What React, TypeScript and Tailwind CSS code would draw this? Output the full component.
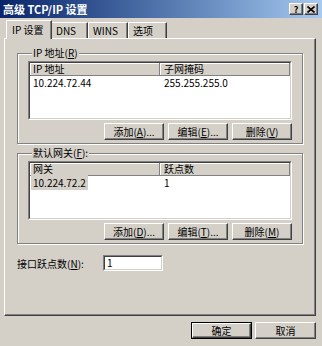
import React from "react";

const raised =
  "bg-[#d4d0c8] border border-t-white border-l-white border-r-[#404040] border-b-[#404040] shadow-[inset_-1px_-1px_0_#808080]";

function Btn({ children, wide, isDefault }: { children: React.ReactNode; wide?: boolean; isDefault?: boolean }) {
  if (isDefault) {
    return (
      <div className={`${wide ? "w-[61px]" : "w-[60px]"} h-[17px] border border-black`}>
        <div className={`${raised} h-full flex items-center justify-center`}>{children}</div>
      </div>
    );
  }
  return (
    <div className={`${raised} ${wide ? "w-[61px]" : "w-[60px]"} h-[17px] flex items-center justify-center`}>
      {children}
    </div>
  );
}

function ListView({ cols, row, selected }: { cols: [string, string]; row: [string, string]; selected?: boolean }) {
  return (
    <div className="h-[59px] border border-t-[#808080] border-l-[#808080] border-r-white border-b-white">
      <div className="h-full border border-t-[#404040] border-l-[#404040] border-r-[#d4d0c8] border-b-[#d4d0c8] bg-white flex flex-col">
        <div className="flex h-[13px] bg-[#d4d0c8]">
          <div className="w-[130px] border-r border-b border-[#808080] shadow-[inset_1px_1px_0_#fff] pl-[3px] leading-[12px]">
            {cols[0]}
          </div>
          <div className="flex-1 border-r border-b border-[#808080] shadow-[inset_1px_1px_0_#fff] pl-[4px] leading-[12px]">
            {cols[1]}
          </div>
        </div>
        <div className="flex h-[12px] leading-[12px] mt-[1px]">
          <div className="w-[130px] pl-[1px]">
            <span className={`${selected ? "bg-[#d4d0c8]" : ""} px-[2px]`}>{row[0]}</span>
          </div>
          <div className="pl-[4px]">{row[1]}</div>
        </div>
      </div>
    </div>
  );
}

function Group({ label, children }: { label: React.ReactNode; children: React.ReactNode }) {
  return (
    <fieldset className="border border-[#808080] shadow-[inset_1px_1px_0_#fff,1px_1px_0_#fff] px-[10px] pb-[3px] pt-[2px]">
      <legend className="ml-[4px] px-[1px] bg-[#d4d0c8] leading-[12px]">{label}</legend>
      {children}
    </fieldset>
  );
}

function Buttons({ a, b, c }: { a: React.ReactNode; b: React.ReactNode; c: React.ReactNode }) {
  return (
    <div className="flex justify-end gap-[4px] mt-[3px]">
      <Btn>{a}</Btn>
      <Btn>{b}</Btn>
      <Btn>{c}</Btn>
    </div>
  );
}

export default function App() {
  return (
    <div className="w-[322px] h-[346px] bg-[#d4d0c8] flex flex-col text-[10px] text-black font-['Noto_Sans_CJK_SC','Noto_Sans',sans-serif] overflow-hidden">
      {/* title bar */}
      <div className="h-[18px] flex items-center justify-between pl-[3px] pr-[4px] bg-linear-to-r from-[#0a246a] to-[#a6caf0]">
        <span className="text-white font-bold text-[11px] leading-none">高级 TCP/IP 设置</span>
        <div className="flex gap-[1px]">
          <div className={`${raised} w-[14px] h-[12px] flex items-center justify-center font-bold text-[9px] leading-none`}>?</div>
          <div className={`${raised} w-[14px] h-[12px] flex items-center justify-center`}>
            <svg width="8" height="7" viewBox="0 0 8 7">
              <path d="M0.5 0.5 L7.5 6.5 M7.5 0.5 L0.5 6.5" stroke="#000" strokeWidth="1.6" />
            </svg>
          </div>
        </div>
      </div>

      <div className="flex-1 flex flex-col pl-[4px] pr-[6px] pt-[2px]">
        {/* tabs */}
        <div className="flex items-end h-[18px] pl-[2px] relative z-10">
          <div className="h-[19px] -mb-[1px] w-[46px] bg-[#d4d0c8] border-t border-l border-t-white border-l-white border-r border-r-[#404040] shadow-[inset_-1px_0_0_#808080] pl-[5px] pt-[3px] leading-[12px]">
            IP 设置
          </div>
          <div className="h-[16px] w-[36px] border-t border-t-white border-r border-r-[#404040] shadow-[inset_-1px_0_0_#808080] pl-[4px] pt-[2px] leading-[12px]">
            DNS
          </div>
          <div className="h-[16px] w-[40px] border-t border-t-white border-l border-l-white border-r border-r-[#404040] shadow-[inset_-1px_0_0_#808080] pl-[4px] pt-[2px] leading-[12px]">
            WINS
          </div>
          <div className="h-[16px] w-[39px] border-t border-t-white border-l border-l-white border-r border-r-[#404040] shadow-[inset_-1px_0_0_#808080] pl-[4px] pt-[2px] leading-[12px]">
            选项
          </div>
        </div>

        {/* tab panel */}
        <div className="h-[278px] border border-t-white border-l-white border-r-[#404040] border-b-[#404040] shadow-[inset_-1px_-1px_0_#808080] pl-[12px] pr-[12px] pt-[8px] flex flex-col">
          <Group label={<>IP 地址(<u>R</u>)</>}>
            <ListView cols={["IP 地址", "子网掩码"]} row={["10.224.72.44", "255.255.255.0"]} />
            <Buttons
              a={<>添加(<u>A</u>)...</>}
              b={<>编辑(<u>E</u>)...</>}
              c={<>删除(<u>V</u>)</>}
            />
          </Group>

          <div className="mt-[3px]">
            <Group label={<>默认网关(<u>F</u>):</>}>
              <ListView cols={["网关", "跃点数"]} row={["10.224.72.2", "1"]} selected />
              <Buttons
                a={<>添加(<u>D</u>)...</>}
                b={<>编辑(<u>T</u>)...</>}
                c={<>删除(<u>M</u>)</>}
              />
            </Group>
          </div>

          <div className="flex items-center mt-[11px] h-[16px]">
            <span className="w-[86px]">接口跃点数(<u>N</u>):</span>
            <div className="w-[60px] h-[16px] border border-t-[#808080] border-l-[#808080] border-r-white border-b-white">
              <div className="h-full border border-t-[#404040] border-l-[#404040] border-r-[#d4d0c8] border-b-[#d4d0c8] bg-white pl-[2px] leading-[12px]">
                1
              </div>
            </div>
          </div>
        </div>

        {/* bottom buttons */}
        <div className="flex justify-end gap-[3px] mt-[6px]">
          <Btn wide isDefault>确定</Btn>
          <Btn wide>取消</Btn>
        </div>
      </div>
    </div>
  );
}
